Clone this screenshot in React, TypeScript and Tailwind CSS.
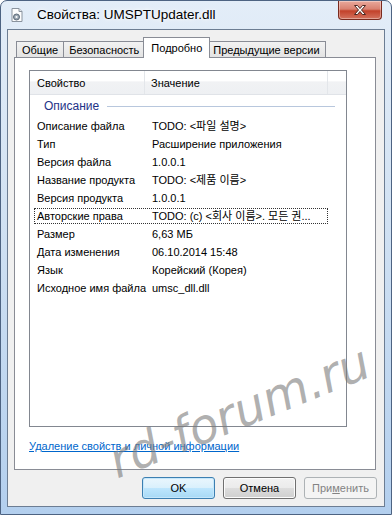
import React from "react";

const FONT = "font-['Liberation_Sans','Noto_Sans_CJK_KR',sans-serif]";

const rows: { label: string; value: string; focused?: boolean }[] = [
  { label: "Описание файла", value: "TODO: <파일 설명>" },
  { label: "Тип", value: "Расширение приложения" },
  { label: "Версия файла", value: "1.0.0.1" },
  { label: "Название продукта", value: "TODO: <제품 이름>" },
  { label: "Версия продукта", value: "1.0.0.1" },
  { label: "Авторские права", value: "TODO: (c) <회사 이름>. 모든 권...", focused: true },
  { label: "Размер", value: "6,63 МБ" },
  { label: "Дата изменения", value: "06.10.2014 15:48" },
  { label: "Язык", value: "Корейский (Корея)" },
  { label: "Исходное имя файла", value: "umsc_dll.dll" },
];

function DllIcon() {
  return (
    <svg width="16" height="16" viewBox="0 0 16 16">
      <path d="M3 1.5h7l3 3v10H3z" fill="#fdfdfd" stroke="#8a939e" />
      <path d="M10 1.5v3h3" fill="#e4e8ec" stroke="#8a939e" />
      <circle cx="7.5" cy="10" r="3" fill="#9aa6b2" stroke="#5d6a78" />
      <circle cx="7.5" cy="10" r="1.1" fill="#fdfdfd" />
    </svg>
  );
}

function CloseButton() {
  return (
    <div className="absolute top-0 right-[9px] w-[44px] h-[19px] rounded-b-[4px] border border-t-0 border-[#7a2a1e] bg-[linear-gradient(to_bottom,#e9a99c_0%,#d98170_45%,#c3412a_55%,#d4735f_100%)] flex items-center justify-center shadow-[inset_0_0_0_1px_rgba(255,255,255,0.35)]">
      <svg width="16" height="12" viewBox="0 0 16 12">
        <path
          d="M2.5 1.5h3l2.5 3 2.5-3h3l-4 4.5 4 4.5h-3l-2.5-3-2.5 3h-3l4-4.5z"
          fill="#ffffff"
          stroke="#4a2620"
          strokeWidth="1"
          strokeLinejoin="round"
        />
      </svg>
    </div>
  );
}

function Tab({ label, active }: { label: string; active?: boolean }) {
  if (active) {
    return (
      <div className="relative z-10 -mx-[2px] -mb-px h-[21px] px-[7px] pt-[3px] bg-white border border-b-0 border-[#898c95] text-black">
        {label}
      </div>
    );
  }
  return (
    <div className="h-[16px] px-[5px] pt-px leading-[14px] bg-[linear-gradient(to_bottom,#f2f2f2,#e3e3e3)] border border-b-0 border-[#898c95] -ml-px first:ml-0 text-black">
      {label}
    </div>
  );
}

function DialogButton({
  children,
  variant = "normal",
}: {
  children: React.ReactNode;
  variant?: "default" | "normal" | "disabled";
}) {
  const styles =
    variant === "default"
      ? "border-[#3c7fb1] bg-[linear-gradient(to_bottom,#eaf6fd_0%,#d9f0fc_50%,#bee6fd_51%,#a7d9f5_100%)] text-black shadow-[inset_0_0_0_1px_#c5e7fb]"
      : variant === "disabled"
      ? "border-[#adb2b5] bg-[#f4f4f4] text-[#838383]"
      : "border-[#707070] bg-[linear-gradient(to_bottom,#f2f2f2_0%,#ebebeb_50%,#dddddd_51%,#cfcfcf_100%)] text-black shadow-[inset_0_0_0_1px_#fcfcfc]";
  return (
    <div className={`w-[73px] h-[22px] rounded-[3px] border flex items-center justify-center ${styles}`}>
      {children}
    </div>
  );
}

export default function App() {
  return (
    <div className={`${FONT} text-[11px] leading-[14px] relative w-[392px] h-[515px] overflow-hidden rounded-t-[7px] border border-[#4d6382] bg-[linear-gradient(to_bottom,#e3edf8_0%,#d2e2f3_40%,#b3cfee_100%)]`}>
      {/* Title bar */}
      <div className="h-[28px] flex items-center pl-[8px]">
        <DllIcon />
        <span className="ml-[12px] text-[13.5px] text-black [text-shadow:0_0_6px_#fff,0_0_3px_#fff]">
          Свойства: UMSPTUpdater.dll
        </span>
      </div>
      <CloseButton />

      {/* Client area */}
      <div className="mx-[6px] border border-[#6c7d93] bg-[#f0f0f0] h-[478px]">
        {/* Tabs */}
        <div className="flex items-end h-[20px] mt-[7px] ml-[8px] text-[11px]">
          <Tab label="Общие" />
          <Tab label="Безопасность" />
          <Tab label="Подробно" active />
          <Tab label="Предыдущие версии" />
        </div>

        {/* Tab page */}
        <div className="ml-[6px] w-[362px] h-[413px] border border-[#898c95] bg-white pt-[12px] pl-[14px]">
          {/* List view */}
          <div className="w-[318px] h-[357px] border border-[#828790] bg-white">
            <div className="flex h-[24px] items-center border-b border-[#e0e3e8] bg-[linear-gradient(to_bottom,#ffffff_45%,#f1f2f4_46%,#eef0f3_100%)]">
              <div className="w-[115px] h-full flex items-center pl-[7px] border-r border-[#e3e6ea]">Свойство</div>
              <div className="w-[183px] h-full flex items-center pl-[6px] border-r border-[#e3e6ea]">Значение</div>
            </div>

            <div className="h-[22px] flex items-center pl-[14px] pr-[11px]">
              <span className="text-[12px] text-[#1e3287]">Описание</span>
              <div className="flex-1 ml-[8px] h-px bg-[#b8c7dd]" />
            </div>

            {rows.map((r) => (
              <div key={r.label} className="relative h-[18px] flex items-center">
                {r.focused && (
                  <div className="absolute left-[4px] top-[1px] w-[294px] h-[16px] border border-dotted border-[#333]" />
                )}
                <div className="w-[115px] pl-[7px] whitespace-nowrap">{r.label}</div>
                <div className="pl-[7px] whitespace-nowrap">{r.value}</div>
              </div>
            ))}
          </div>

          <div className="mt-[12px] text-[#0066cc] underline">
            Удаление свойств и личной информации
          </div>
        </div>

        {/* Buttons */}
        <div className="mt-[7px] ml-[134px] flex gap-[8px]">
          <DialogButton variant="default">OK</DialogButton>
          <DialogButton>Отмена</DialogButton>
          <DialogButton variant="disabled">
            <span>
              При<span className="underline">м</span>енить
            </span>
          </DialogButton>
        </div>
      </div>

      {/* Watermark */}
      <div className="absolute left-[110px] top-[438px] origin-left -rotate-[22deg] pointer-events-none font-['DejaVu_Sans',sans-serif] font-extralight italic text-[48px] leading-none text-[#7a7a7a]/60">
        rd-forum.ru
      </div>
    </div>
  );
}
